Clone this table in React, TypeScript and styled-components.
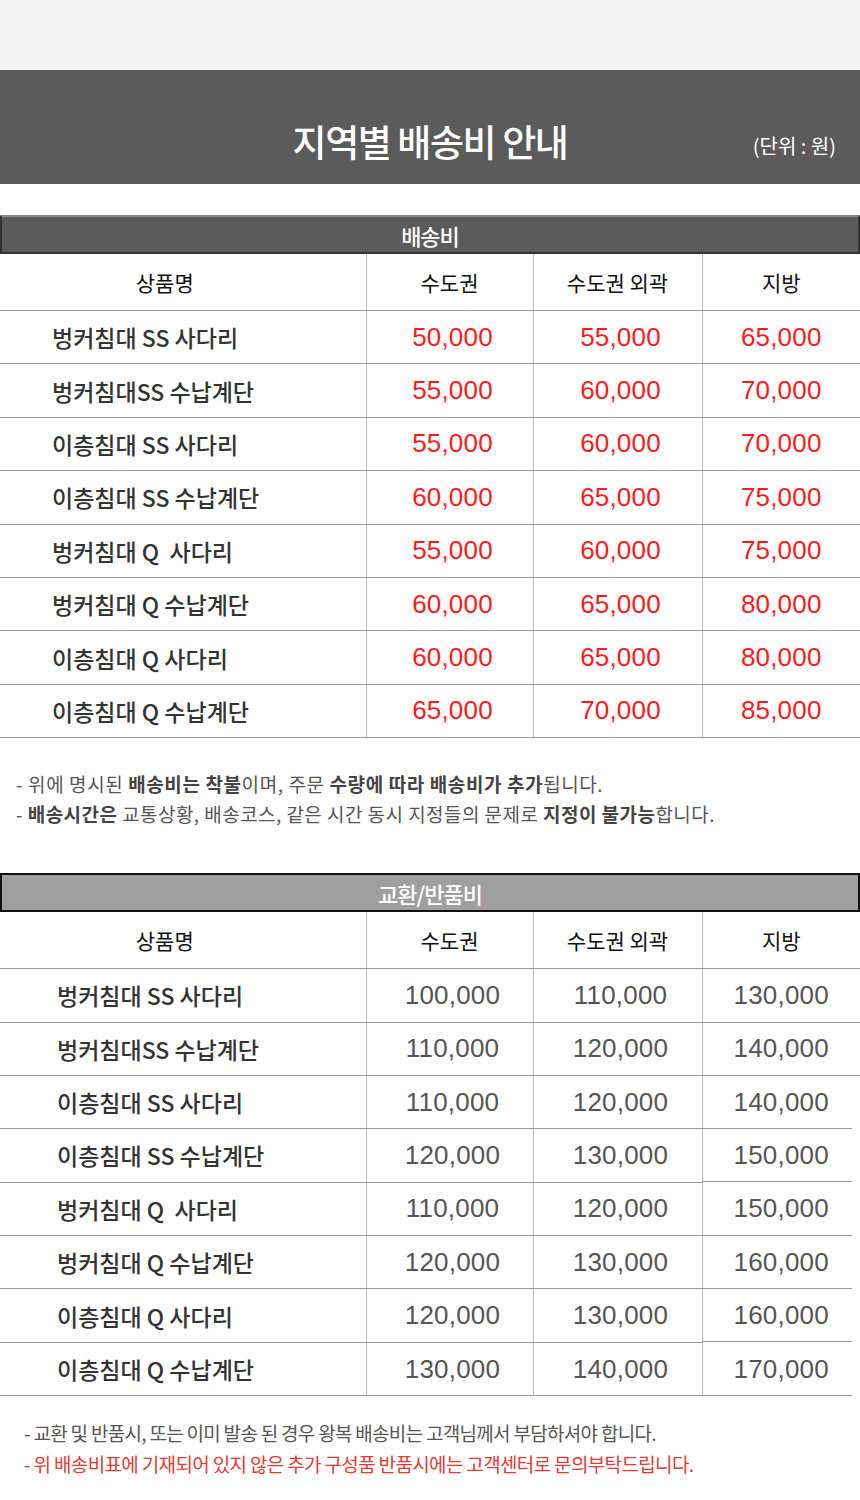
import React from 'react';
import styled, { createGlobalStyle } from 'styled-components';

const GlobalStyle = createGlobalStyle`
  html, body {
    margin: 0;
    padding: 0;
    background: #fff;
    font-family: "Noto Sans CJK KR", "Noto Sans", sans-serif;
  }
`;

type Row = { name: string; prices: string[] };
type Tone = 'dark' | 'light';

const shippingRows: Row[] = [
  { name: '벙커침대 SS 사다리', prices: ['50,000', '55,000', '65,000'] },
  { name: '벙커침대SS 수납계단', prices: ['55,000', '60,000', '70,000'] },
  { name: '이층침대 SS 사다리', prices: ['55,000', '60,000', '70,000'] },
  { name: '이층침대 SS 수납계단', prices: ['60,000', '65,000', '75,000'] },
  { name: '벙커침대 Q  사다리', prices: ['55,000', '60,000', '75,000'] },
  { name: '벙커침대 Q 수납계단', prices: ['60,000', '65,000', '80,000'] },
  { name: '이층침대 Q 사다리', prices: ['60,000', '65,000', '80,000'] },
  { name: '이층침대 Q 수납계단', prices: ['65,000', '70,000', '85,000'] },
];

const returnRows: Row[] = [
  { name: '벙커침대 SS 사다리', prices: ['100,000', '110,000', '130,000'] },
  { name: '벙커침대SS 수납계단', prices: ['110,000', '120,000', '140,000'] },
  { name: '이층침대 SS 사다리', prices: ['110,000', '120,000', '140,000'] },
  { name: '이층침대 SS 수납계단', prices: ['120,000', '130,000', '150,000'] },
  { name: '벙커침대 Q  사다리', prices: ['110,000', '120,000', '150,000'] },
  { name: '벙커침대 Q 수납계단', prices: ['120,000', '130,000', '160,000'] },
  { name: '이층침대 Q 사다리', prices: ['120,000', '130,000', '160,000'] },
  { name: '이층침대 Q 수납계단', prices: ['130,000', '140,000', '170,000'] },
];

const columns = ['상품명', '수도권', '수도권 외곽', '지방'];

interface TableProps {
  title: string;
  rows: Row[];
  tone: Tone;
  shortFrom?: number; // rows from this index get a slightly shorter bottom rule
}

const FeeTable: React.FC<TableProps> = ({ title, rows, tone, shortFrom }) => (
  <section>
    <TitleBar $tone={tone}>{title}</TitleBar>
    <Table>
      <colgroup>
        <col style={{ width: 366 }} />
        <col style={{ width: 167 }} />
        <col style={{ width: 169 }} />
        <col />
      </colgroup>
      <thead>
        <tr>
          {columns.map((c) => (
            <HeadCell key={c}>{c}</HeadCell>
          ))}
        </tr>
      </thead>
      <tbody>
        {rows.map((r, i) => {
          const short = shortFrom !== undefined && i >= shortFrom;
          return (
            <tr key={i}>
              <NameCell $tone={tone}>{r.name}</NameCell>
              {r.prices.map((p, j) => (
                <PriceCell key={j} $tone={tone} $short={short && j === 2}>
                  {p}
                </PriceCell>
              ))}
            </tr>
          );
        })}
      </tbody>
    </Table>
  </section>
);

const App: React.FC = () => {
  return (
    <Page>
      <GlobalStyle />
      <TopStrip />
      <Banner>
        <BannerTitle>지역별 배송비 안내</BannerTitle>
        <Unit>(단위 : 원)</Unit>
      </Banner>

      <Spacer $h={31} />
      <FeeTable title='배송비' rows={shippingRows} tone='dark' />
      <Notes $indent={16} $top={34} $bottom={47} $gap={6}>
        <Note $spacing={0.6}>
          - 위에 명시된 <b>배송비는 착불</b>이며, 주문 <b>수량에 따라 배송비가 추가</b>됩니다.
        </Note>
        <Note $spacing={0.45}>
          - <b>배송시간은</b> 교통상황, 배송코스, 같은 시간 동시 지정들의 문제로{' '}
          <b>지정이 불가능</b>합니다.
        </Note>
      </Notes>

      <FeeTable title='교환/반품비' rows={returnRows} tone='light' shortFrom={2} />
      <Notes $indent={24} $top={25} $bottom={30} $gap={7}>
        <Note $spacing={-0.7}>
          - 교환 및 반품시, 또는 이미 발송 된 경우 왕복 배송비는 고객님께서 부담하셔야 합니다.
        </Note>
        <Note $red $spacing={-0.65}>
          - 위 배송비표에 기재되어 있지 않은 추가 구성품 반품시에는 고객센터로 문의부탁드립니다.
        </Note>
      </Notes>
    </Page>
  );
};

export default App;

const Page = styled.div`
  width: 860px;
  background: #fff;
`;

const TopStrip = styled.div`
  height: 69px;
  background: #f4f4f4;
  border-bottom: 1px solid #fff;
`;

const Banner = styled.div`
  position: relative;
  height: 114px;
  background: #5b5b5b;
  display: flex;
  align-items: center;
  justify-content: center;
  padding-top: 28px;
  box-sizing: border-box;
`;

const BannerTitle = styled.h1`
  margin: 0;
  color: #fff;
  font-size: 37px;
  font-weight: 500;
  letter-spacing: -1.4px;
  line-height: 1;
`;

const Unit = styled.span`
  position: absolute;
  right: 24px;
  top: 66px;
  color: #fff;
  font-size: 20px;
  letter-spacing: 0;
  line-height: 1;
`;

const Spacer = styled.div<{ $h: number }>`
  height: ${(p) => p.$h}px;
`;

const TitleBar = styled.div<{ $tone: Tone }>`
  height: 39px;
  box-sizing: border-box;
  background: ${(p) => (p.$tone === 'dark' ? '#5b5b5b' : '#9f9f9f')};
  border: 2px solid ${(p) => (p.$tone === 'dark' ? '#333' : '#111')};
  border-top-color: ${(p) => (p.$tone === 'dark' ? '#888' : '#111')};
  color: #fff;
  font-size: 22px;
  font-weight: 500;
  letter-spacing: -1px;
  display: flex;
  align-items: center;
  justify-content: center;
`;

const Table = styled.table`
  width: 860px;
  border-collapse: collapse;
  table-layout: fixed;
`;

const HeadCell = styled.th`
  height: 56px;
  padding: 0;
  font-size: 21px;
  font-weight: 400;
  color: #111;
  text-align: center;
  border-bottom: 1px solid #999;
  border-left: 1px solid #bbb;
  &:first-child {
    border-left: none;
    padding-right: 36px;
  }
`;

const NameCell = styled.td<{ $tone: Tone }>`
  height: 52.4px;
  padding: 0 0 0 ${(p) => (p.$tone === 'dark' ? 52 : 57)}px;
  font-size: 23px;
  font-weight: 500;
  color: #333;
  white-space: pre;
  border-bottom: 1px solid #999;
`;

const PriceCell = styled.td<{ $tone: Tone; $short?: boolean }>`
  height: 52.4px;
  padding: 0 0 0 6px;
  text-align: center;
  font-family: "Liberation Sans", Arial, sans-serif;
  font-size: 26px;
  letter-spacing: 0.2px;
  color: ${(p) => (p.$tone === 'dark' ? '#ff1a1a' : '#555')};
  border-bottom: ${(p) => (p.$short ? 'none' : '1px solid #999')};
  border-left: 1px solid #bbb;
  background: ${(p) =>
    p.$short
      ? 'linear-gradient(#999, #999) no-repeat left bottom / calc(100% - 8px) 1px'
      : 'none'};
  &:last-child {
    padding: 0;
  }
`;

const Notes = styled.div<{ $indent: number; $top: number; $bottom: number; $gap: number }>`
  padding: ${(p) => `${p.$top}px 0 ${p.$bottom}px ${p.$indent}px`};
  display: flex;
  flex-direction: column;
  gap: ${(p) => p.$gap}px;
`;

const Note = styled.p<{ $red?: boolean; $spacing: number }>`
  margin: 0;
  font-size: 19px;
  line-height: 24px;
  letter-spacing: ${(p) => p.$spacing}px;
  color: ${(p) => (p.$red ? '#e53935' : '#555')};
  b {
    font-weight: 700;
    color: #444;
  }
`;
